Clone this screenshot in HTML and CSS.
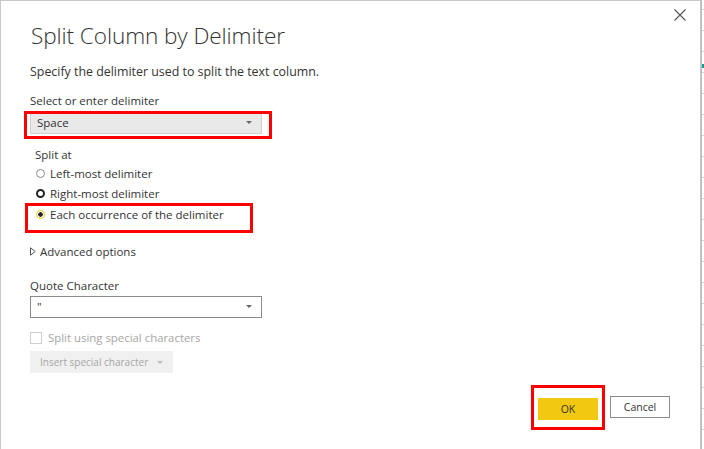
FILE: index.html
```html
<!DOCTYPE html>
<html lang="en">
<head>
  <meta charset="UTF-8" />
  <title>Split Column by Delimiter</title>
  <link rel="stylesheet" href="styles.css">
</head>
<body>

  <div class="screen">

    <!-- Dialog -->
    <div class="dialog">
      <button class="close" aria-label="Close">
        <svg width="12" height="12" viewBox="0 0 12 12"><path d="M0.5 0.5 L11.5 11.5 M11.5 0.5 L0.5 11.5" stroke="#555" stroke-width="1.1" fill="none"/></svg>
      </button>

      <h1>Split Column by Delimiter</h1>
      <p class="subtext">Specify the delimiter used to split the text column.</p>

      <label class="field-label">Select or enter delimiter</label>
      <div class="marked">
        <div class="select filled">
          <span>Space</span>
          <span class="caret"></span>
        </div>
        <div class="mark mark-delim"></div>
      </div>

      <div class="group-label">Split at</div>
      <div class="radio"><span class="dot"></span>Left-most delimiter</div>
      <div class="radio"><span class="dot hover"></span>Right-most delimiter</div>
      <div class="marked">
        <div class="radio"><span class="dot checked"></span>Each occurrence of the delimiter</div>
        <div class="mark mark-radio"></div>
      </div>

      <div class="advanced">
        <svg class="tri" width="6" height="9" viewBox="0 0 6 9"><path d="M0.5 0.8 L5.2 4.5 L0.5 8.2 Z" stroke="#555" stroke-width="1" fill="none"/></svg>
        Advanced options
      </div>

      <label class="field-label quote">Quote Character</label>
      <div class="select">
        <span>"</span>
        <span class="caret"></span>
      </div>

      <div class="check disabled"><span class="box"></span>Split using special characters</div>
      <button class="insert" disabled>Insert special character <span class="caret light"></span></button>

      <div class="actions">
        <div class="marked">
          <button class="btn primary">OK</button>
          <div class="mark mark-ok"></div>
        </div>
        <button class="btn">Cancel</button>
      </div>
    </div>

    <!-- Sheet behind the dialog -->
    <div class="sheet">
      <div class="cell-mark"></div>
    </div>

  </div>

</body>
</html>
```

FILE: styles.css
```css
:root {
  --text: #333;
  --muted: #a6a6a6;
  --border: #c8c8c8;
  --yellow: #f2c811;
  --red: #f00;
}

* {
  box-sizing: border-box;
}

body {
  margin: 0;
  font-family: 'Open Sans', 'Noto Sans', sans-serif;
  color: var(--text);
  background: #fff;
}

.screen {
  display: flex;
  height: 449px;
}

.dialog {
  position: relative;
  width: 701px;
  height: 449px;
  border-left: 1px solid var(--border);
  border-top: 1px solid var(--border);
  border-right: 1px solid var(--border);
  padding: 0 0 0 29px;
  display: flex;
  flex-direction: column;
  align-items: flex-start;
}

.sheet {
  position: relative;
  flex: 1;
  background: repeating-linear-gradient(to bottom, #fff 0, #fff 9px, #d4d4d4 9px, #d4d4d4 10px, #fff 10px, #fff 21px);
  border-left: 1px solid #bdbdbd;
}

.cell-mark {
  position: absolute;
  top: 64px;
  left: 0;
  width: 3px;
  height: 4px;
  background: #1a9c8c;
}

.close {
  position: absolute;
  top: 8px;
  right: 14px;
  padding: 0;
  border: none;
  background: none;
  line-height: 0;
}

h1 {
  margin: 20px 0 0 1px;
  font-weight: 300;
  font-size: 22.6px;
  line-height: 30px;
  letter-spacing: -0.1px;
}

.subtext {
  margin: 12px 0 0;
  font-size: 12.4px;
  line-height: 18px;
}

.field-label {
  margin-top: 11px;
  font-size: 11.5px;
  line-height: 17px;
}

.field-label.quote {
  margin-top: 17px;
}

.marked {
  position: relative;
}

.mark {
  position: absolute;
  border: 3px solid var(--red);
  pointer-events: none;
}

.mark-delim { left: -6px; top: 2px; width: 248px; height: 28px; }
.mark-radio { left: -5px; top: 0; width: 228px; height: 30px; }
.mark-ok { left: -7px; top: -11px; width: 74px; height: 45px; }

.select {
  position: relative;
  width: 232px;
  height: 22px;
  margin-top: 2px;
  padding: 0 6px;
  border: 1px solid #8a8a8a;
  background: #fff;
  font-size: 11.5px;
  line-height: 20px;
}

.select.filled {
  margin-top: 3px;
  background: #e9e9e9;
  border-color: #d0d0d0;
}

.caret {
  position: absolute;
  right: 9px;
  top: 8px;
  width: 0;
  height: 0;
  border-left: 3px solid transparent;
  border-right: 3px solid transparent;
  border-top: 3px solid #666;
}

.caret.light {
  position: static;
  display: inline-block;
  margin-left: 6px;
  vertical-align: 2px;
  border-top-color: #bbb;
}

.group-label {
  margin: 12px 0 0 5px;
  font-size: 11.5px;
  line-height: 17px;
}

.radio {
  display: flex;
  align-items: center;
  height: 20px;
  margin-left: 6px;
  font-size: 11.5px;
}

.marked .radio {
  height: 22px;
}

.dot {
  width: 9px;
  height: 9px;
  margin-right: 5px;
  border: 1.5px solid #8a8a8a;
  border-radius: 50%;
}

.dot.hover {
  border: 2px solid #222;
}

.dot.checked {
  border: 1.5px solid var(--yellow);
  background: radial-gradient(circle, #222 0, #222 2px, #fff 2.5px);
}

.advanced {
  display: flex;
  align-items: center;
  margin-top: 18px;
  font-size: 11.5px;
  line-height: 17px;
}

.tri {
  margin-right: 4px;
}

.check {
  display: flex;
  align-items: center;
  margin-top: 11px;
  font-size: 11.4px;
  line-height: 17px;
}

.check.disabled {
  color: var(--muted);
}

.box {
  width: 12px;
  height: 12px;
  margin-right: 6px;
  border: 1px solid #d0d0d0;
  background: #fff;
}

.insert {
  margin-top: 5px;
  height: 22px;
  padding: 0 10px;
  border: none;
  background: #f0f0f0;
  color: var(--muted);
  font-family: inherit;
  font-size: 10px;
}

.actions {
  display: flex;
  gap: 12px;
  align-self: flex-end;
  margin: auto 30px 29px 0;
}

.btn {
  width: 60px;
  height: 22px;
  padding: 0;
  border: 1px solid #8a8a8a;
  background: #fff;
  color: var(--text);
  font-family: inherit;
  font-size: 10.5px;
}

.btn.primary {
  border-color: var(--yellow);
  background: var(--yellow);
}
```
